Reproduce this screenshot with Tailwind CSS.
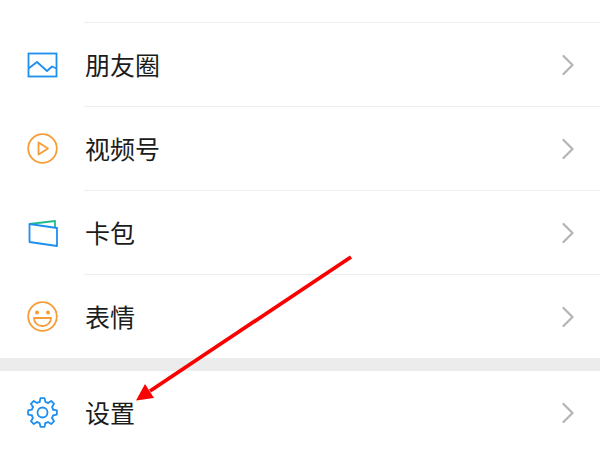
<!DOCTYPE html>
<html lang="zh">
<head>
    <meta charset="UTF-8">
    <title>我</title>
    <script src="https://cdn.jsdelivr.net/npm/@tailwindcss/browser@4"></script>
</head>
<body class="bg-white">
    <main class="relative w-[600px] h-[450px] overflow-hidden bg-white font-['Noto_Sans_CJK_SC','Noto_Sans',sans-serif] text-[25px] text-[#1c1c1c]">
        <div class="h-[22px] ml-[84px] border-b border-[#eeeeee] box-content"></div>

        <div class="flex items-center h-[83px] pl-[27px] pr-[26px]">
            <svg class="w-[31px] h-[31px] shrink-0" viewBox="0 0 31 31" fill="none" stroke="#1e8fee" stroke-width="1.8">
                <rect x="1.5" y="4.5" width="28" height="23"/>
                <path d="M1.5 19.5 L10 13 L20 22 L25 17.5 L29.5 19.5" stroke-linejoin="round"/>
            </svg>
            <span class="ml-[27px] flex-1">朋友圈</span>
            <svg class="w-[12px] h-[22px]" viewBox="0 0 12 22" fill="none" stroke="#b4b4b4" stroke-width="2.2" stroke-linecap="round" stroke-linejoin="round"><path d="M1.5 2 L10.5 11 L1.5 20"/></svg>
        </div>
        <div class="h-px ml-[84px] bg-[#eeeeee]"></div>

        <div class="flex items-center h-[83px] pl-[27px] pr-[26px]">
            <svg class="w-[31px] h-[31px] shrink-0" viewBox="0 0 31 31" fill="none" stroke="#f69d38" stroke-width="1.8">
                <circle cx="15.5" cy="15.5" r="14.3"/>
                <path d="M11.5 9.5 L21 15.5 L11.5 21.5 Z" stroke-linejoin="round"/>
            </svg>
            <span class="ml-[27px] flex-1">视频号</span>
            <svg class="w-[12px] h-[22px]" viewBox="0 0 12 22" fill="none" stroke="#b4b4b4" stroke-width="2.2" stroke-linecap="round" stroke-linejoin="round"><path d="M1.5 2 L10.5 11 L1.5 20"/></svg>
        </div>
        <div class="h-px ml-[84px] bg-[#eeeeee]"></div>

        <div class="flex items-center h-[83px] pl-[27px] pr-[26px]">
            <svg class="w-[31px] h-[31px] shrink-0" viewBox="0 0 31 31" fill="none" stroke-width="1.8" stroke-linejoin="round">
                <path d="M2.5 7 L28 4 L28 10.5" stroke="#21bd8c"/>
                <path d="M2.5 7 L30 11 L30 29 L2.5 25 Z" stroke="#1e8fee"/>
            </svg>
            <span class="ml-[27px] flex-1">卡包</span>
            <svg class="w-[12px] h-[22px]" viewBox="0 0 12 22" fill="none" stroke="#b4b4b4" stroke-width="2.2" stroke-linecap="round" stroke-linejoin="round"><path d="M1.5 2 L10.5 11 L1.5 20"/></svg>
        </div>
        <div class="h-px ml-[84px] bg-[#eeeeee]"></div>

        <div class="flex items-center h-[83px] pl-[27px] pr-[26px]">
            <svg class="w-[31px] h-[31px] shrink-0" viewBox="0 0 31 31" fill="none" stroke="#f69d38" stroke-width="1.8">
                <circle cx="15.5" cy="15.5" r="14.3"/>
                <circle cx="10" cy="11.5" r="2" fill="#f69d38" stroke="none"/>
                <circle cx="21" cy="11.5" r="2" fill="#f69d38" stroke="none"/>
                <path d="M7 17 H24 C24 22 20 25 15.5 25 C11 25 7 22 7 17 Z" stroke-linejoin="round"/>
            </svg>
            <span class="ml-[27px] flex-1">表情</span>
            <svg class="w-[12px] h-[22px]" viewBox="0 0 12 22" fill="none" stroke="#b4b4b4" stroke-width="2.2" stroke-linecap="round" stroke-linejoin="round"><path d="M1.5 2 L10.5 11 L1.5 20"/></svg>
        </div>

        <div class="h-[13px] bg-[#ececec]"></div>

        <div class="flex items-center h-[83px] pl-[27px] pr-[26px]">
            <svg class="w-[31px] h-[31px] shrink-0" viewBox="0 0 31 31" fill="none" stroke="#1e8fee" stroke-width="1.8" stroke-linejoin="round" stroke-linecap="round">
                <defs>
                    <path id="cog" d="M12.65 4.87 L13.48 1.14 L17.52 1.14 L18.35 4.87 A11 11 0 0 1 21 5.97"/>
                </defs>
                <use href="#cog"/>
                <use href="#cog" transform="rotate(45 15.5 15.5)"/>
                <use href="#cog" transform="rotate(90 15.5 15.5)"/>
                <use href="#cog" transform="rotate(135 15.5 15.5)"/>
                <use href="#cog" transform="rotate(180 15.5 15.5)"/>
                <use href="#cog" transform="rotate(225 15.5 15.5)"/>
                <use href="#cog" transform="rotate(270 15.5 15.5)"/>
                <use href="#cog" transform="rotate(315 15.5 15.5)"/>
                <circle cx="15.5" cy="15.5" r="5"/>
            </svg>
            <span class="ml-[27px] flex-1">设置</span>
            <svg class="w-[12px] h-[22px]" viewBox="0 0 12 22" fill="none" stroke="#b4b4b4" stroke-width="2.2" stroke-linecap="round" stroke-linejoin="round"><path d="M1.5 2 L10.5 11 L1.5 20"/></svg>
        </div>

        <!-- red annotation arrow -->
        <svg class="absolute left-0 top-0 w-[600px] h-[450px] pointer-events-none" viewBox="0 0 600 450" fill="none">
            <path d="M351 257 L150 391" stroke="#fb0000" stroke-width="3.8"/>
            <path d="M136 400.5 L145 384 L154 398 Z" fill="#fb0000"/>
        </svg>
    </main>
</body>
</html>
